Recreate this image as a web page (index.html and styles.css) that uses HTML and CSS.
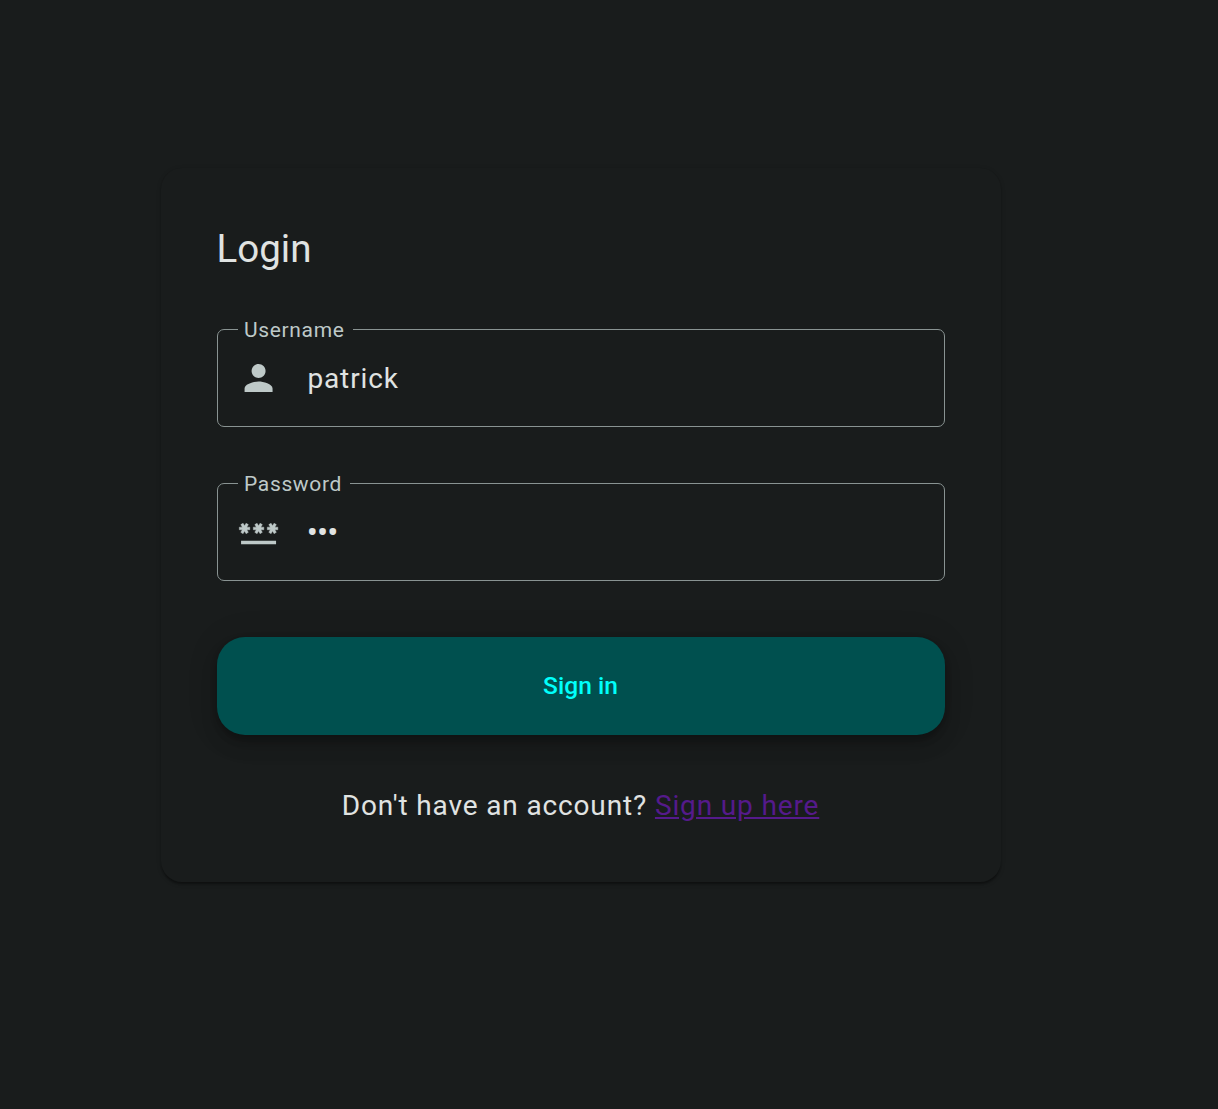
FILE: index.html
```html
<!DOCTYPE html>
<html lang="en">
<head>
<meta charset="utf-8">
<title>Login</title>
<link rel="stylesheet" href="styles.css">
</head>
<body>
<main class="card">
  <h1 class="title">Login</h1>
  <form class="form">
    <fieldset class="field">
      <legend class="label label-user">Username</legend>
      <div class="row">
        <svg class="icon" viewBox="0.25 0 24 24"><path d="M12 12c2.21 0 4-1.79 4-4s-1.79-4-4-4-4 1.79-4 4 1.79 4 4 4zm0 2c-2.67 0-8 1.34-8 4v2h16v-2c0-2.66-5.33-4-8-4z"/></svg>
        <span class="value">patrick</span>
      </div>
    </fieldset>
    <fieldset class="field">
      <legend class="label label-pass">Password</legend>
      <div class="row">
        <svg class="icon" viewBox="0.25 0 24 24"><path d="M2 17h20v2H2z"/><path class="stars" d="M3.15 12.95 4 11.47l.85 1.48 1.3-.75-.85-1.48H7v-1.5H5.3l.85-1.47L4.85 7 4 8.47 3.15 7l-1.3.75.85 1.47H1v1.5h1.7l-.85 1.48 1.3.75zm6.7-.75 1.3.75.85-1.48.85 1.48 1.3-.75-.85-1.48H15v-1.5h-1.7l.85-1.47-1.3-.75L12 8.47 11.15 7l-1.3.75.85 1.47H9v1.5h1.7l-.85 1.48zM23 9.22h-1.7l.85-1.47-1.3-.75L20 8.47 19.15 7l-1.3.75.85 1.47H17v1.5h1.7l-.85 1.48 1.3.75.85-1.48.85 1.48 1.3-.75-.85-1.48H23v-1.5z"/></svg>
        <span class="value dots">•••</span>
      </div>
    </fieldset>
    <button class="submit" type="button">Sign in</button>
  </form>
  <p class="footer">Don't have an account? <a class="link" href="#">Sign up here</a></p>
</main>
</body>
</html>
```
FILE: styles.css
```css
* { box-sizing: border-box; }
body {
  margin: 0;
  min-height: 1109px;
  padding: 168px 0 0 161px;
  background: #191c1c;
  color: #e0e3e2;
  font-family: Roboto, sans-serif;
}
.card {
  width: 840px;
  height: 714px;
  padding: 56px;
  border-radius: 21px;
  background: #191c1c;
  box-shadow: 0 3.5px 1.75px -1.75px rgba(0,0,0,.2), 0 1.75px 1.75px rgba(0,0,0,.14), 0 1.75px 5.25px rgba(0,0,0,.12);
}
.title {
  margin: 0 0 56px -.5px;
  font-size: 38.5px;
  line-height: 49px;
  font-weight: 400;
  letter-spacing: 0;
}
.form {
  display: flex;
  flex-direction: column;
  gap: 56px;
}
.field {
  height: 98px;
  margin: 0;
  padding: 0 0 0 20px;
  border: 1px solid #899392;
  border-radius: 7px;
  min-width: 0;
}
.label {
  height: 1px;
  padding: 0 0 0 6px;
  font-size: 21px;
  line-height: 3px;
  letter-spacing: .66px;
  color: #bec9c8;
  white-space: nowrap;
}
.label-user { width: 115px; }
.label-pass { width: 112px; }
.row {
  display: flex;
  align-items: center;
  gap: 27.4px;
  height: 96px;
}
.icon {
  width: 42px;
  height: 42px;
  fill: #bec9c8;
}
.stars {
  stroke: #bec9c8;
  stroke-width: .25;
}
.value {
  padding-top: 2px;
  font-size: 28px;
  line-height: 42px;
  letter-spacing: .875px;
}
.dots {
  margin-left: -.7px;
  font-size: 33px;
  letter-spacing: -.8px;
}
.submit {
  height: 98px;
  padding: 0 1px 2px 0;
  border: 0;
  border-radius: 28px;
  background: #00504f;
  color: #00fffb;
  font: 500 24.5px/35px Roboto, sans-serif;
  letter-spacing: .05px;
  box-shadow: 0 5.25px 8.75px -1.75px rgba(0,0,0,.2), 0 10.5px 17.5px rgba(0,0,0,.14), 0 1.75px 31.5px rgba(0,0,0,.12);
}
.footer {
  margin: 50px 1px 0 0;
  text-align: center;
  font-size: 28px;
  line-height: 42px;
  letter-spacing: .86px;
}
.link { color: #551a8b; }
```
